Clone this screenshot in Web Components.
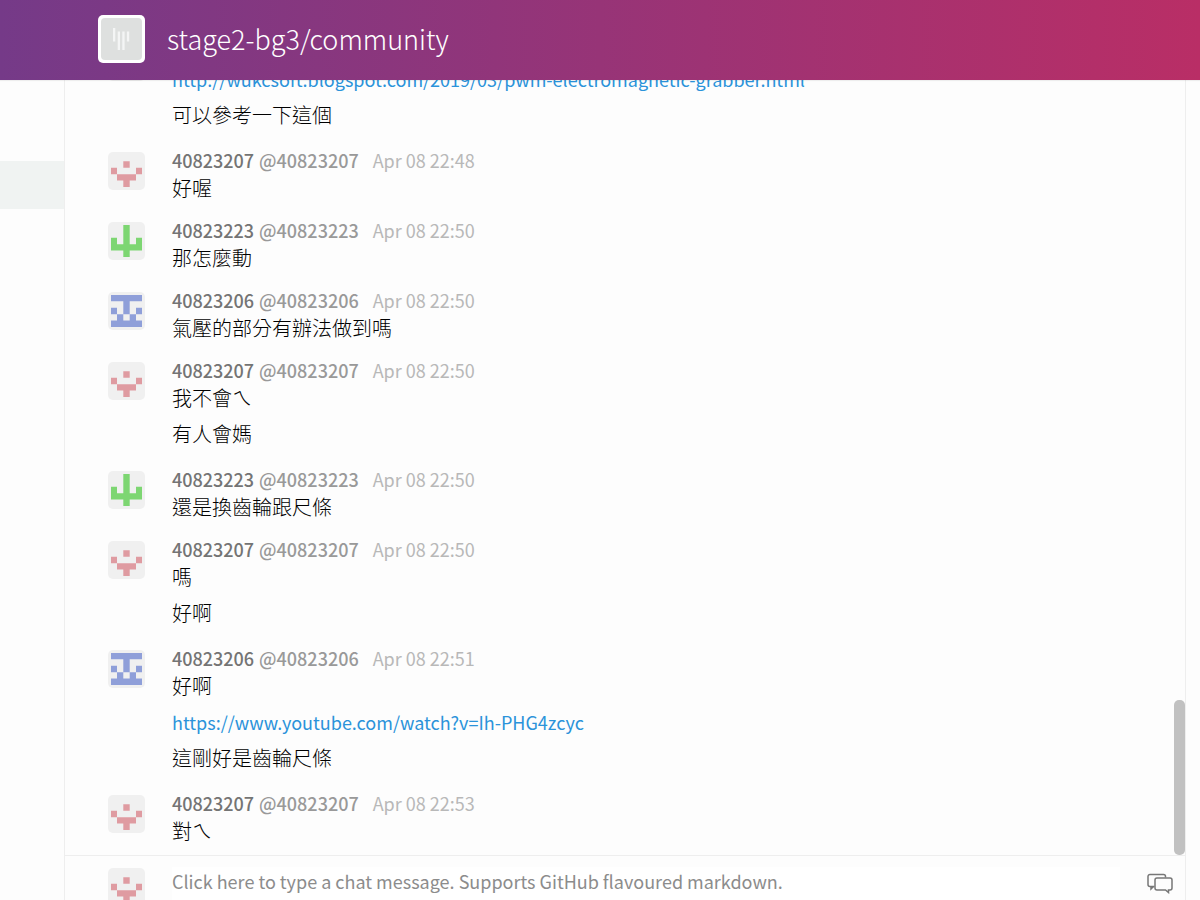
<!DOCTYPE html>
<html lang="zh-Hant">
<head>
<meta charset="utf-8">
<title>stage2-bg3/community</title>
<style>
  html, body { height: 100%; }
  body {
    margin: 0;
    font-family: "Noto Sans CJK TC", "Noto Sans", sans-serif;
    background: #fdfdfd;
    overflow: hidden;
  }
</style>
</head>
<body>
<chat-app></chat-app>
<script>
const define = (name, html, setup) => {
  const template = document.createElement('template');
  template.innerHTML = html;
  customElements.define(name, class extends HTMLElement {
    connectedCallback() {
      if (this.shadowRoot) return;
      this.attachShadow({ mode: 'open' }).append(template.content.cloneNode(true));
      if (setup) setup(this, this.shadowRoot);
    }
  });
};

/* Identicons: 5 x 5 cells with a half-cell margin. */
const identicons = {
  '40823207': { color: '#df9ba1', rows: ['.....', '..#..', '#...#', '.###.', '..#..'] },
  '40823223': { color: '#7dd672', rows: ['..#..', '..#..', '#.#.#', '#####', '..#..'] },
  '40823206': { color: '#8f9fd9', rows: ['#####', '..#..', '#.#.#', '.#.#.', '#####'] }
};

define('user-avatar', `
  <style>
    :host { display: block; width: 37px; height: 38px; border-radius: 5px; background: #f0f0f0; overflow: hidden; }
    svg { display: block; width: 100%; height: 100%; }
  </style>
  <svg viewBox="0 0 37 38" aria-hidden="true"></svg>
`, (host, root) => {
  const icon = identicons[host.getAttribute('user')];
  if (!icon) return;
  let d = '';
  const xs = [3, 9, 15.3, 21.7, 28, 34], ys = [3, 9.3, 15.7, 22.2, 28.6, 35];
  icon.rows.forEach((row, r) => [...row].forEach((cell, c) => {
    if (cell === '#') d += `M${xs[c]} ${ys[r]}H${xs[c + 1]}V${ys[r + 1]}H${xs[c]}z`;
  }));
  root.querySelector('svg').innerHTML = `<path fill="${icon.color}" d="${d}"/>`;
});

define('room-header', `
  <style>
    :host {
      display: flex; align-items: center; flex: none; box-sizing: border-box;
      height: 80px; padding: 0 98px 2px; gap: 22px; position: relative; z-index: 1;
      background: linear-gradient(to right, #753a88, #b92e66);
      box-shadow: 0 1px 1px rgba(0, 0, 0, .06);
    }
    .logo { width: 47px; height: 48px; box-sizing: border-box; padding: 3px; background: #fff; border-radius: 5px; }
    svg { display: block; width: 100%; height: 100%; border-radius: 4px; background: #dee0df; }
    h1 { margin: 0; color: #fff; font-size: 27px; line-height: 40px; font-weight: 300; white-space: nowrap; }
  </style>
  <div class="logo">
    <svg viewBox="0 0 41 42" aria-hidden="true">
      <path fill="#f4f5f5" d="M12 10h2.300v13.500h-2.300zM16.700 13.500h2.300v18.500h-2.300zM21.300 13.500h2.300v18.500h-2.300zM25.900 13.500h2.300v10h-2.300z"/>
    </svg>
  </div>
  <h1><slot></slot></h1>
`);

define('room-rail', `
  <style>
    :host { display: block; flex: none; width: 64px; padding-top: 81px; border-right: 1px solid #eeeeee; }
    .current { height: 48px; background: #f0f3f2; }
  </style>
  <div class="current"></div>
`);

define('chat-line', `
  <style>
    :host { display: block; font-size: 20px; line-height: 28px; font-weight: 300; color: #000; margin-top: 8px; }
    :host([first]) { margin-top: 0; }
    ::slotted(a) { font-size: 18px; font-weight: 400; color: #2b93da; text-decoration: none; }
  </style>
  <slot></slot>
`);

define('chat-message', `
  <style>
    :host { display: grid; grid-template-columns: 37px minmax(0, 1fr); column-gap: 27px; padding: 0 40px 15px 43px; }
    :host([thread]) { padding-bottom: 18px; }
    user-avatar { margin-top: 5px; }
    .head { display: flex; align-items: center; height: 27px; font-size: 18px; line-height: 27px; font-weight: 500; white-space: nowrap; }
    .name { color: #747474; }
    .handle { color: #999999; margin-left: 5px; }
    time { color: #b8b8b8; margin-left: 14px; font-weight: 400; }
  </style>
  <user-avatar></user-avatar>
  <div>
    <div class="head"></div>
    <slot></slot>
  </div>
`, (host, root) => {
  const user = host.getAttribute('user');
  if (!user) return;
  const avatar = document.createElement('user-avatar');
  avatar.setAttribute('user', user);
  root.querySelector('user-avatar').replaceWith(avatar);
  root.querySelector('.head').innerHTML =
    `<span class="name">${user}</span><span class="handle">@${user}</span><time>${host.getAttribute('time')}</time>`;
});

define('chat-log', `
  <style>
    :host { display: flex; flex-direction: column; justify-content: flex-end; flex: 1; min-height: 0; overflow: hidden; position: relative; }
    .thumb { position: absolute; right: 0; bottom: 0; width: 11px; height: 20%; border-radius: 5px; background: #c1c1c1; }
    ::slotted(*) { flex: none; }
    ::slotted(:last-child) { padding-bottom: 10px; }
  </style>
  <slot></slot>
  <div class="thumb"></div>
`);

define('chat-composer', `
  <style>
    :host { display: grid; grid-template-columns: 37px minmax(0, 1fr) 26px; column-gap: 27px; flex: none; height: 44px; box-sizing: content-box;
      padding: 0 12px 0 43px; border-top: 1px solid #eeeeee; overflow: hidden; }
    user-avatar { margin-top: 12px; }
    textarea { display: block; margin: 11px 0 0; height: 60px; border: 0; padding: 0; outline: 0; resize: none; background: #fff;
      font: 400 18px/28px "Noto Sans CJK TC", "Noto Sans", sans-serif; color: #333; overflow: hidden; }
    textarea::placeholder { color: #8c8c8c; opacity: 1; }
    button { margin: 16px 0 0; padding: 0; border: 0; background: none; width: 26px; height: 22px; }
    svg { display: block; }
  </style>
  <user-avatar user="40823207"></user-avatar>
  <textarea aria-label="Chat message" placeholder="Click here to type a chat message. Supports GitHub flavoured markdown."></textarea>
  <button type="button" aria-label="Compose mode">
    <svg width="26" height="22" viewBox="0 0 26 22" fill="none" stroke="#777" stroke-width="1.5">
      <path d="M7.500 14.500H3a2 2 0 0 1-2-2V4.500A2 2 0 0 1 3 2.500H16.500a2 2 0 0 1 2 2V5.500"/>
      <path d="M4 14.500v2.500l2.500-2.500"/>
      <path d="M10 6h13a2 2 0 0 1 2 2v8a2 2 0 0 1-2 2H21.500v2.500l-3-2.500H10A2 2 0 0 1 8 16V8A2 2 0 0 1 10 6z"/>
    </svg>
  </button>
`);

define('chat-app', `
  <style>
    :host { display: flex; flex-direction: column; height: 100vh; }
    .body { display: flex; flex: 1; min-height: 0; }
    main { display: flex; flex-direction: column; flex: 1; min-width: 0; margin-right: 14px; border-right: 1px solid #eeeeee; }
  </style>
  <room-header>stage2-bg3/community</room-header>
  <div class="body">
    <room-rail></room-rail>
    <main>
      <chat-log>
        <chat-message thread>
          <chat-line first><a href="http://wukcsoft.blogspot.com/2019/03/pwm-electromagnetic-grabber.html">http://wukcsoft.blogspot.com/2019/03/pwm-electromagnetic-grabber.html</a></chat-line>
          <chat-line>可以參考一下這個</chat-line>
        </chat-message>
        <chat-message user="40823207" time="Apr 08 22:48"><chat-line first>好喔</chat-line></chat-message>
        <chat-message user="40823223" time="Apr 08 22:50"><chat-line first>那怎麼動</chat-line></chat-message>
        <chat-message user="40823206" time="Apr 08 22:50"><chat-line first>氣壓的部分有辦法做到嗎</chat-line></chat-message>
        <chat-message user="40823207" time="Apr 08 22:50" thread><chat-line first>我不會ㄟ</chat-line><chat-line>有人會媽</chat-line></chat-message>
        <chat-message user="40823223" time="Apr 08 22:50"><chat-line first>還是換齒輪跟尺條</chat-line></chat-message>
        <chat-message user="40823207" time="Apr 08 22:50" thread><chat-line first>嗎</chat-line><chat-line>好啊</chat-line></chat-message>
        <chat-message user="40823206" time="Apr 08 22:51" thread><chat-line first>好啊</chat-line><chat-line><a href="https://www.youtube.com/watch?v=Ih-PHG4zcyc">https://www.youtube.com/watch?v=Ih-PHG4zcyc</a></chat-line><chat-line>這剛好是齒輪尺條</chat-line></chat-message>
        <chat-message user="40823207" time="Apr 08 22:53"><chat-line first>對ㄟ</chat-line></chat-message>
      </chat-log>
      <chat-composer></chat-composer>
    </main>
  </div>
`);
</script>
</body>
</html>
